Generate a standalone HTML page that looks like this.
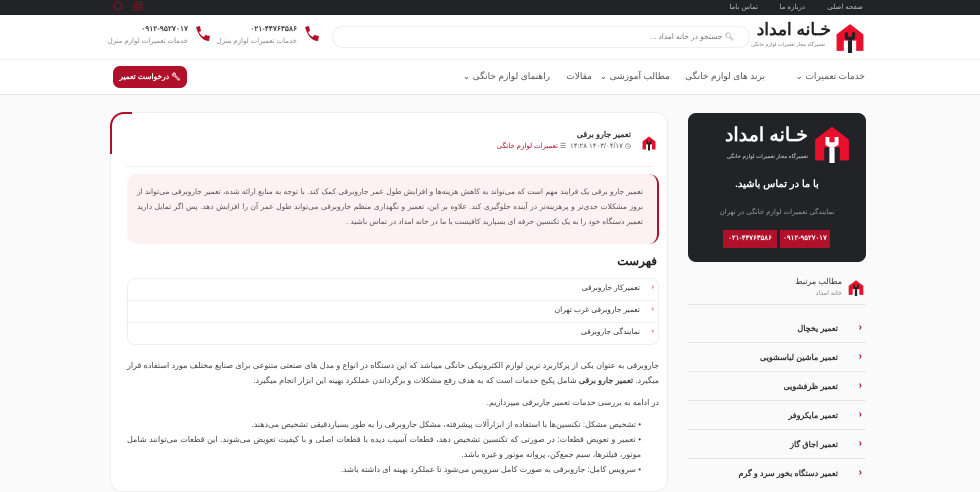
<!DOCTYPE html>
<html lang="fa" dir="rtl"><head><meta charset="utf-8">
<style>
*{margin:0;padding:0;box-sizing:border-box}
body{width:980px;height:480px;overflow:hidden;background:#fafafa;font-family:"Liberation Sans","Noto Sans CJK SC",sans-serif;color:#333;position:relative;font-size:8px}
.a{position:absolute}
.top{left:0;top:0;width:980px;height:15px;background:#222327}
.top span{color:#bbb;font-size:7px;position:absolute;top:3px}
.hdr{left:0;top:15px;width:980px;height:45px;background:#fff;border-bottom:1px solid #eee}
.nav{left:0;top:60px;width:980px;height:35px;background:#fff;border-bottom:1px solid #e8e8e8}
.nav span{position:absolute;top:11px;font-size:9px;color:#555;white-space:nowrap}
.red{color:#b0102a}
.card{left:110px;top:112px;width:558px;height:380px;background:#fff;border:1px solid #eee;border-radius:12px}
.li{position:absolute;right:0;width:530px;height:22px;border-bottom:1px solid #eee;font-size:7.5px;color:#333}
.p{font-size:8px;color:#444;line-height:15px;text-align:justify}
.sl{position:absolute;left:688px;width:178px;height:29px;border-bottom:1px solid #e5e5e5;font-size:8px;color:#333;font-weight:bold}
.sl b{position:absolute;right:28px;top:10px;font-weight:bold}
.sl i{position:absolute;right:4px;top:8px;color:#b0102a;font-style:normal;font-size:10px}
</style></head><body>
<div class="a top">
<span style="right:117px">صفحه اصلی</span><span style="right:175px">درباره ما</span><span style="right:222px">تماس باما</span>
<svg class="a" style="left:113px;top:1px" width="30" height="12"><circle cx="5" cy="5" r="4" fill="none" stroke="#8a1020" stroke-width="1"/><rect x="21" y="1" width="8" height="8" rx="2" fill="none" stroke="#8a1020"/><circle cx="25" cy="5" r="2" fill="none" stroke="#8a1020"/></svg>
</div>
<div class="a hdr">
<svg class="a" style="left:833px;top:7px" width="34" height="31" viewBox="0 0 32 30"><path d="M3 12 L16 2 L29 12 V28 H22 V18 H10 V28 H3Z" fill="#e8102d"/><path d="M11 10 V16 Q16 20 21 16 V10 H18 V14 H14 V10Z M14 18 H18 V30 H14Z" fill="#222"/></svg>
<div class="a" style="right:149px;top:5px;font-size:17px;font-weight:bold;color:#222">خـانه امداد</div>
<div class="a" style="right:155px;top:27px;font-size:5px;color:#777">تعمیرگاه مجاز تعمیرات لوازم خانگی</div>
<div class="a" style="left:332px;top:11px;width:418px;height:22px;border:1px solid #eee;border-radius:11px;background:#fff"></div>
<div class="a" style="right:246px;top:17px;font-size:7.5px;color:#777">🔍︎ جستجو در خانه امداد ...</div>
<svg class="a" style="left:302px;top:10px" width="18" height="18" viewBox="0 0 18 18"><path d="M3 2 L7 1 L8 6 L6 7 Q8 11 11 12 L12 10 L17 11 L16 16 Q7 16 3 2Z" fill="#b0102a"/></svg>
<div class="a" style="right:683px;top:9px;font-size:7.5px;font-weight:bold;color:#444">۰۲۱-۴۴۷۶۳۵۸۶</div>
<div class="a" style="right:683px;top:22px;font-size:7px;color:#888">خدمات تعمیرات لوازم منزل</div>
<svg class="a" style="left:193px;top:10px" width="18" height="18" viewBox="0 0 18 18"><path d="M3 2 L7 1 L8 6 L6 7 Q8 11 11 12 L12 10 L17 11 L16 16 Q7 16 3 2Z" fill="#b0102a"/></svg>
<div class="a" style="right:792px;top:9px;font-size:7.5px;font-weight:bold;color:#444">۰۹۱۲-۹۵۲۷۰۱۷</div>
<div class="a" style="right:792px;top:22px;font-size:7px;color:#888">خدمات تعمیرات لوازم منزل</div>
</div>
<div class="a nav">
<span style="right:115px">خدمات تعمیرات ⌄</span><span style="right:215px">برند های لوازم خانگی</span><span style="right:310px">مطالب آموزشی ⌄</span><span style="right:388px">مقالات</span><span style="right:430px">راهنمای لوازم خانگی ⌄</span>
<div class="a" style="left:113px;top:6px;width:74px;height:22px;background:#b0102a;border-radius:7px;color:#fff;font-size:7.5px;font-weight:bold;text-align:center;line-height:22px">🔧︎ درخواست تعمیر</div>
</div>
<div class="a card">
<div class="a" style="left:-1px;top:-1px;width:22px;height:42px;border-left:2px solid #b0102a;border-top:2px solid #b0102a;border-top-left-radius:14px"></div>
<svg class="a" style="right:10px;top:22px" width="16" height="16" viewBox="0 0 32 30"><path d="M3 12 L16 2 L29 12 V28 H22 V18 H10 V28 H3Z" fill="#e8102d"/><path d="M11 10 V16 Q16 20 21 16 V10 H18 V14 H14 V10Z M14 18 H18 V30 H14Z" fill="#222"/></svg>
<div class="a" style="right:36px;top:17px;font-size:8px;font-weight:bold;color:#333">تعمیر جارو برقی</div>
<div class="a" style="right:36px;top:29px;font-size:7px;color:#555">◷ ۱۴۰۳/۰۴/۱۷ ۱۴:۲۸ &nbsp;☰ <span class="red">تعمیرات لوازم خانگی</span></div>
<div class="a" style="left:15px;top:53px;width:528px;height:1px;background:#eee"></div>
<div class="a" style="left:16px;top:61px;width:532px;height:70px;background:#fdf1f3;border-radius:10px;border-right:2px solid #b0102a"></div>
<div class="a p" style="left:26px;top:71px;width:506px;color:#555;font-size:7.5px">تعمیر جارو برقی یک فرایند مهم است که می‌تواند به کاهش هزینه‌ها و افزایش طول عمر جاروبرقی کمک کند. با توجه به منابع ارائه شده، تعمیر جاروبرقی می‌تواند از بروز مشکلات جدی‌تر و پرهزینه‌تر در آینده جلوگیری کند. علاوه بر این، تعمیر و نگهداری منظم جاروبرقی می‌تواند طول عمر آن را افزایش دهد. پس اگر تمایل دارید تعمیر دستگاه خود را به یک تکنسین حرفه ای بسپارید کافیست با ما در خانه امداد در تماس باشید .</div>
<div class="a" style="right:10px;top:141px;font-size:12px;font-weight:bold;color:#222">فهرست</div>
<div class="a" style="left:16px;top:165px;width:532px;height:67px;border:1px solid #eee;border-radius:8px"></div>
<div class="li" style="top:166px;right:11px"><span style="position:absolute;right:16px;top:4px">تعمیرکار جاروبرقی</span><span class="red" style="position:absolute;right:2px;top:3px">‹</span></div>
<div class="li" style="top:188px;right:11px"><span style="position:absolute;right:16px;top:4px">تعمیر جاروبرقی غرب تهران</span><span class="red" style="position:absolute;right:2px;top:3px">‹</span></div>
<div class="li" style="top:210px;right:11px;border:0"><span style="position:absolute;right:16px;top:4px">نمایندگی جاروبرقی</span><span class="red" style="position:absolute;right:2px;top:3px">‹</span></div>
<div class="a p" style="left:16px;top:245px;width:532px">جاروبرقی به عنوان یکی از پرکاربرد ترین لوازم الکترونیکی خانگی میباشد که این دستگاه در انواع و مدل های صنعتی متنوعی برای صنایع مختلف مورد استفاده قرار میگیرد. <b>تعمیر جارو برقی</b> شامل پکیج خدمات است که به هدف رفع مشکلات و برگرداندن عملکرد بهینه این ابزار انجام میگیرد.</div>
<div class="a p" style="left:16px;top:282px;width:532px">در ادامه به بررسی خدمات تعمیر جاربرقی میپردازیم.</div>
<div class="a p" style="left:16px;top:304px;width:514px">• تشخیص مشکل: تکنسین‌ها با استفاده از ابزارآلات پیشرفته، مشکل جاروبرقی را به طور بسیاردقیقی تشخیص می‌دهند.<br>• تعمیر و تعویض قطعات: در صورتی که تکنسین تشخیص دهد، قطعات آسیب دیده با قطعات اصلی و با کیفیت تعویض می‌شوند. این قطعات می‌توانند شامل موتور، فیلترها، سیم جمع‌کن، پروانه موتور و غیره باشد.<br>• سرویس کامل: جاروبرقی به صورت کامل سرویس می‌شود تا عملکرد بهینه ای داشته باشد.</div>
</div>
<div class="a" style="left:688px;top:113px;width:178px;height:149px;background:#222327;border-radius:8px"></div>
<svg class="a" style="left:811px;top:124px" width="42" height="39" viewBox="0 0 32 30"><path d="M3 12 L16 2 L29 12 V28 H22 V18 H10 V28 H3Z" fill="#e8102d"/><path d="M11 10 V16 Q16 20 21 16 V10 H18 V14 H14 V10Z M14 18 H18 V30 H14Z" fill="#fff"/></svg>
<div class="a" style="right:172px;top:124px;font-size:19px;font-weight:bold;color:#fff">خـانه امداد</div>
<div class="a" style="right:172px;top:154px;font-size:5.5px;color:#ddd">تعمیرگاه مجاز تعمیرات لوازم خانگی</div>
<div class="a" style="left:688px;width:178px;top:179px;text-align:center;font-size:10px;font-weight:bold;color:#fff">با ما در تماس باشید.</div>
<div class="a" style="left:688px;width:178px;top:208px;text-align:center;font-size:7px;color:#999">نمایندگی تعمیرات لوازم خانگی در تهران</div>
<div class="a" style="left:780px;top:230px;width:50px;height:18px;background:#b0102a;color:#fff;font-size:7px;font-weight:bold;text-align:center;line-height:18px">۰۹۱۲-۹۵۲۷۰۱۷</div>
<div class="a" style="left:723px;top:230px;width:54px;height:18px;background:#b0102a;color:#fff;font-size:7px;font-weight:bold;text-align:center;line-height:18px">۰۲۱-۴۴۷۶۳۵۸۶</div>
<svg class="a" style="left:847px;top:279px" width="18" height="17" viewBox="0 0 32 30"><path d="M3 12 L16 2 L29 12 V28 H22 V18 H10 V28 H3Z" fill="#e8102d"/><path d="M11 10 V16 Q16 20 21 16 V10 H18 V14 H14 V10Z M14 18 H18 V30 H14Z" fill="#222"/></svg>
<div class="a" style="right:138px;top:277px;font-size:8px;color:#333">مطالب مرتبط</div>
<div class="a" style="right:138px;top:289px;font-size:6.5px;color:#888">خانه امداد</div>
<div class="a" style="left:688px;top:304px;width:178px;height:1px;background:#e5e5e5"></div>
<div class="sl" style="top:314px"><i>‹</i><b>تعمیر یخچال</b></div>
<div class="sl" style="top:343px"><i>‹</i><b>تعمیر ماشین لباسشویی</b></div>
<div class="sl" style="top:372px"><i>‹</i><b>تعمیر ظرفشویی</b></div>
<div class="sl" style="top:401px"><i>‹</i><b>تعمیر مایکروفر</b></div>
<div class="sl" style="top:430px"><i>‹</i><b>تعمیر اجاق گاز</b></div>
<div class="sl" style="top:459px;border:0"><i>‹</i><b>تعمیر دستگاه بخور سرد و گرم</b></div>
</body></html>
